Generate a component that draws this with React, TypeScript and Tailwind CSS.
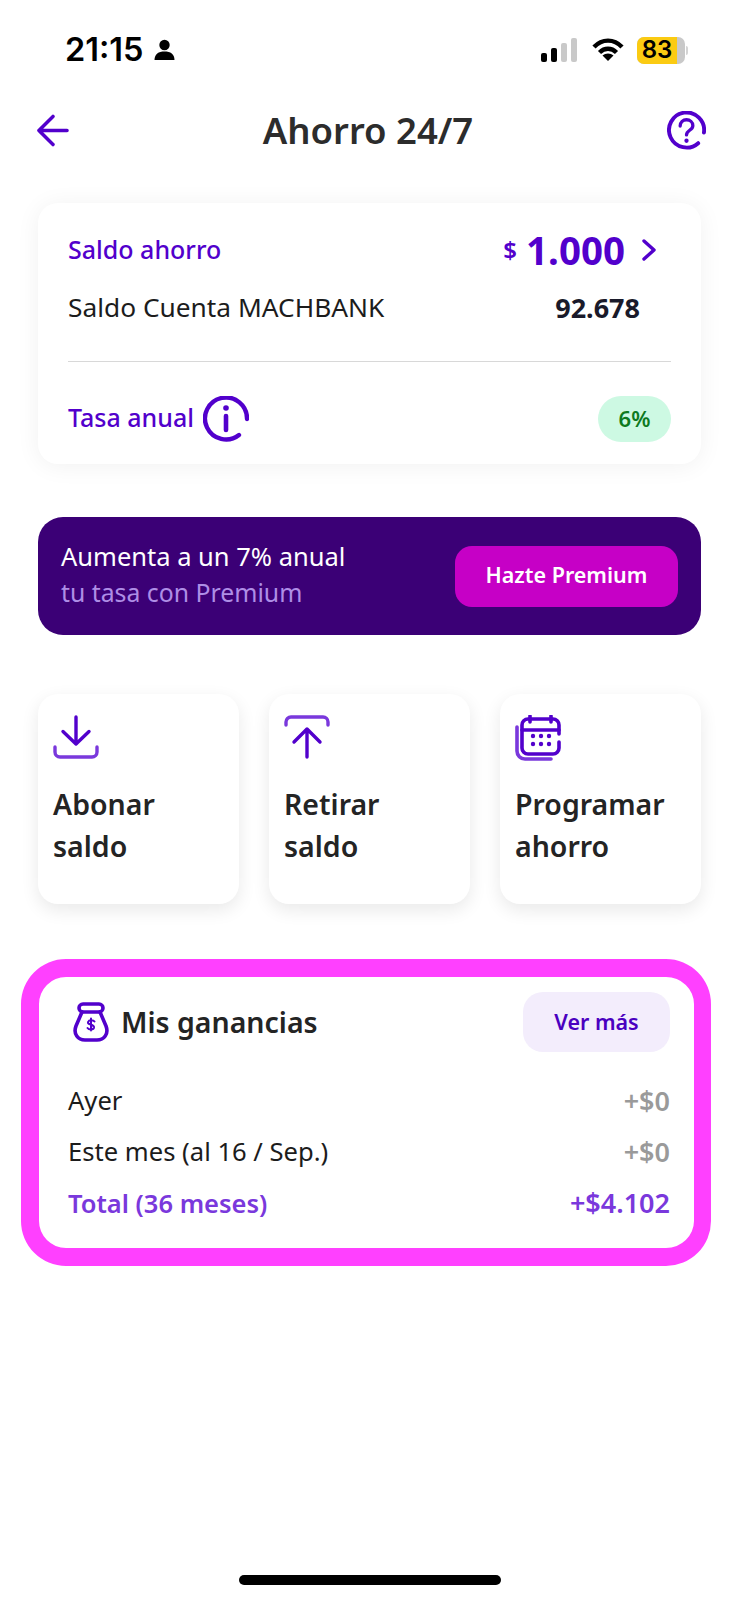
const font = { fontFamily: '"Noto Sans", sans-serif' };

function StatusBar() {
  return (
    <div className="flex h-[100px] items-center justify-between pl-[65px] pr-[51px]">
      <div className="flex items-center gap-[9px] text-black">
        <span className="text-[32.5px] font-semibold leading-none" style={{ fontFamily: '"Inter", sans-serif' }}>21:15</span>
        <svg width="23" height="22" viewBox="0 0 22 22" fill="#000">
          <circle cx="11" cy="6" r="5.2" />
          <path d="M1 21c0-6 4-8.500 10-8.500S21 15 21 21z" />
        </svg>
      </div>
      <div className="flex items-center gap-[13px]">
        <svg className="mr-[2px]" width="36" height="24" viewBox="0 0 36 24">
          <rect x="0" y="15" width="6" height="9" rx="2" fill="#000" />
          <rect x="10" y="10" width="6" height="14" rx="2" fill="#000" />
          <rect x="20" y="5" width="6" height="19" rx="2" fill="#c9c9c9" />
          <rect x="30" y="0" width="6" height="24" rx="2" fill="#c9c9c9" />
        </svg>
        <svg width="32" height="24" viewBox="0 0 32 24" fill="none" stroke="#000" strokeWidth="4.400">
          <path d="M2 9c8-8.500 20-8.500 28 0" />
          <path d="M7.500 14.500c5-5 12-5 17 0" />
          <path d="M16 23l-5.500-5.500c3-2.700 8-2.700 11 0z" fill="#000" stroke="none" />
        </svg>
        <div className="flex items-center">
          <div className="flex h-[27px] w-[48px] items-center rounded-[7px] bg-[#c9c9c9]">
            <div className="flex h-full w-[40px] items-center justify-center rounded-l-[7px] bg-[#fbcb12] text-[24px] font-semibold leading-none text-black" style={{ fontFamily: '"Inter", sans-serif' }}>83</div>
          </div>
          <div className="ml-[1px] h-[9px] w-[2px] rounded-r-[2px] bg-[#d4d4d4]"></div>
        </div>
      </div>
    </div>
  );
}

function Header() {
  return (
    <div className="flex h-[60px] items-center justify-between pl-[37px] pr-[33px]">
      <svg width="32" height="33" viewBox="0 0 33 33" fill="none" stroke="#5200cc" strokeWidth="3.600" strokeLinecap="round" strokeLinejoin="round">
        <path d="M31 16.500H3M16.500 2L2 16.500 16.500 31" />
      </svg>
      <h1 className="text-[36.5px] font-semibold leading-none text-[#2c2c2c]">Ahorro 24/7</h1>
      <svg width="39" height="39" viewBox="0 0 40 40" fill="none" stroke="#5200cc" strokeWidth="4" strokeLinecap="round">
        <path d="M32 33A18 18 0 1 1 37.900 22" />
        <path d="M13.500 15.500c0-4 3-6.500 6.500-6.500s6.500 2.500 6.500 6c0 5-6.500 4.500-6.500 9.500" strokeWidth="3.400" />
        <circle cx="20" cy="30.500" r="2.200" fill="#5200cc" stroke="none" />
      </svg>
    </div>
  );
}

function BalanceCard() {
  return (
    <section className="rounded-[20px] bg-white px-[30px] pb-[22px] pt-[22px] shadow-[0_2px_24px_rgba(0,0,0,0.06)]">
      <div className="flex h-[50px] items-center justify-between">
        <span className="text-[25px] font-medium text-[#5200cc]">Saldo ahorro</span>
        <div className="flex items-center pr-[14px] text-[#5200cc]">
          <span className="mr-[9px] text-[24px] font-semibold">$</span>
          <span className="text-[38.500px] font-bold leading-none">1.000</span>
          <svg className="ml-[16px]" width="16" height="24" viewBox="0 0 16 24" fill="none" stroke="#5200cc" strokeWidth="3.400" strokeLinecap="round" strokeLinejoin="round">
            <path d="M3 3l10 9-10 9" />
          </svg>
        </div>
      </div>
      <div className="mt-[8px] flex h-[50px] items-center justify-between pr-[31px]">
        <span className="text-[26.300px] text-[#1c1c1c]">Saldo Cuenta MACHBANK</span>
        <span className="text-[27px] font-bold text-[#1a1a2a]">92.678</span>
      </div>
      <div className="mt-[28px] h-px bg-[#d8d8d8]"></div>
      <div className="mt-[34px] flex h-[46px] items-center justify-between">
        <div className="flex items-center gap-[9px]">
          <span className="pb-[3px] text-[25px] font-medium text-[#5200cc]">Tasa anual</span>
          <svg width="46" height="46" viewBox="0 0 46 46" fill="none" stroke="#5200cc" strokeWidth="4.400" strokeLinecap="round">
            <path d="M36 39A21 21 0 1 1 44 23" />
            <path d="M23 20v14" strokeWidth="4.600" />
            <circle cx="23" cy="12" r="2.800" fill="#5200cc" stroke="none" />
          </svg>
        </div>
        <div className="flex h-[46px] w-[73px] items-center justify-center rounded-[23px] bg-[#cdf9e3] pb-[2px] text-[22px] font-semibold text-[#0e7a1f]">6%</div>
      </div>
    </section>
  );
}

function Banner() {
  return (
    <section className="mt-[53px] flex h-[118px] items-center justify-between rounded-[25px] bg-[#3b0076] pl-[23px] pr-[23px]">
      <div className="pb-[4px]">
        <div className="text-[25.500px] leading-[36px] text-white">Aumenta a un 7% anual</div>
        <div className="text-[24.800px] leading-[36px] text-[#ae8ee6]">tu tasa con Premium</div>
      </div>
      <button className="flex h-[61px] w-[223px] items-center justify-center rounded-[17px] bg-[#c600c6] pb-[2px] text-[21.500px] font-semibold text-white">Hazte Premium</button>
    </section>
  );
}

function ActionCard({ icon, a, b }: { icon: React.ReactNode; a: string; b: string }) {
  return (
    <div className="h-[210px] rounded-[20px] bg-white pl-[15px] pt-[21px] shadow-[0_6px_18px_rgba(0,0,0,0.09)]">
      <div className="h-[56px]">{icon}</div>
      <div className="mt-[12px] text-[28.500px] font-semibold leading-[42px] text-[#242424]">
        <div>{a}</div>
        <div>{b}</div>
      </div>
    </div>
  );
}

const DownloadIcon = (
  <svg width="46" height="44" viewBox="0 0 46 44" fill="none" strokeLinecap="round" strokeLinejoin="round">
    <path d="M23 2v27M10 16.500L23 29 36 16.500" stroke="#5200cc" strokeWidth="3.400" />
    <path d="M2 32v5a5 5 0 0 0 5 5h32a5 5 0 0 0 5-5v-5" stroke="#7a38dc" strokeWidth="3.400" />
  </svg>
);
const UploadIcon = (
  <svg width="46" height="44" viewBox="0 0 46 44" fill="none" strokeLinecap="round" strokeLinejoin="round">
    <path d="M23 42V14M10 27L23 14l13 13" stroke="#5200cc" strokeWidth="3.400" />
    <path d="M2 10V7a5 5 0 0 1 5-5h32a5 5 0 0 1 5 5v3" stroke="#7a38dc" strokeWidth="3.400" />
  </svg>
);
const CalendarIcon = (
  <svg width="46" height="46" viewBox="0 0 46 46" fill="none" strokeLinecap="round" strokeLinejoin="round">
    <path d="M2 12v24a8 8 0 0 0 8 8h26" stroke="#7a38dc" strokeWidth="3.600" />
    <path d="M44 27v6a6 6 0 0 1-6 6H13a6 6 0 0 1-6-6V10a6 6 0 0 1 6-6h25a6 6 0 0 1 6 6v9" stroke="#5200cc" strokeWidth="3.600" />
    <path d="M7 15h37M15 1v6M36 1v6" stroke="#5200cc" strokeWidth="3.600" />
    <g fill="#5200cc">
      <circle cx="18" cy="21" r="2.200" /><circle cx="26" cy="21" r="2.200" /><circle cx="34" cy="21" r="2.200" />
      <circle cx="18" cy="29" r="2.200" /><circle cx="26" cy="29" r="2.200" /><circle cx="34" cy="29" r="2.200" />
    </g>
  </svg>
);

function Earnings() {
  const row = 'flex h-[51px] items-center justify-between';
  const label = 'text-[25.600px] text-[#1c1c1c]';
  return (
    <section className="-ml-[17px] -mr-[10px] mt-[55px] rounded-[45px] border-[18px] border-r-[17px] border-[#ff40ff] bg-white">
      <div className="pb-[19px] pl-[29px] pr-[24px] pt-[15px]">
        <div className="flex items-center justify-between">
          <div className="flex items-center gap-[12px] pl-[5px]">
            <svg width="36" height="40" viewBox="0 0 36 40" fill="none" stroke="#5200cc" strokeWidth="3.600" strokeLinecap="round" strokeLinejoin="round">
              <rect x="6" y="2" width="24" height="8" rx="4" />
              <path d="M9 10L3 24c-3 8 2 14 9 14h12c7 0 12-6 9-14l-6-14" />
              <path d="M21.500 19.500c-1-1.500-5.500-2-6.500 .5-1 3 6.500 2 6 5.500-.5 2.500-5 2.500-6.500 .5M18 16.500v12" strokeWidth="2" />
            </svg>
            <span className="text-[28.500px] font-semibold text-[#242424]">Mis ganancias</span>
          </div>
          <button className="flex h-[60px] w-[147px] items-center justify-center rounded-[20px] bg-[#f3edfc] text-[21.500px] font-semibold text-[#4a00c0]">Ver más</button>
        </div>
        <div className="mt-[24px]">
          <div className={row}><span className={label}>Ayer</span><span className="text-[27px] font-semibold text-[#9a9a9a]">+$0</span></div>
          <div className={row}><span className={label}>Este mes (al 16 / Sep.)</span><span className="text-[27px] font-semibold text-[#9a9a9a]">+$0</span></div>
          <div className={row}><span className="text-[25.500px] font-semibold text-[#7a38dc]">Total (36 meses)</span><span className="text-[27px] font-semibold text-[#7a38dc]">+$4.102</span></div>
        </div>
      </div>
    </section>
  );
}

export default function App() {
  return (
    <div className="relative h-[1600px] w-[739px] overflow-hidden bg-white" style={font}>
      <StatusBar />
      <Header />
      <main className="px-[38px] pt-[43px]">
        <BalanceCard />
        <Banner />
        <div className="mt-[59px] grid grid-cols-3 gap-[30px]">
          <ActionCard icon={DownloadIcon} a="Abonar" b="saldo" />
          <ActionCard icon={UploadIcon} a="Retirar" b="saldo" />
          <ActionCard icon={CalendarIcon} a="Programar" b="ahorro" />
        </div>
        <Earnings />
      </main>
      <div className="absolute bottom-[15px] left-[239px] h-[10px] w-[262px] rounded-full bg-black"></div>
    </div>
  );
}
